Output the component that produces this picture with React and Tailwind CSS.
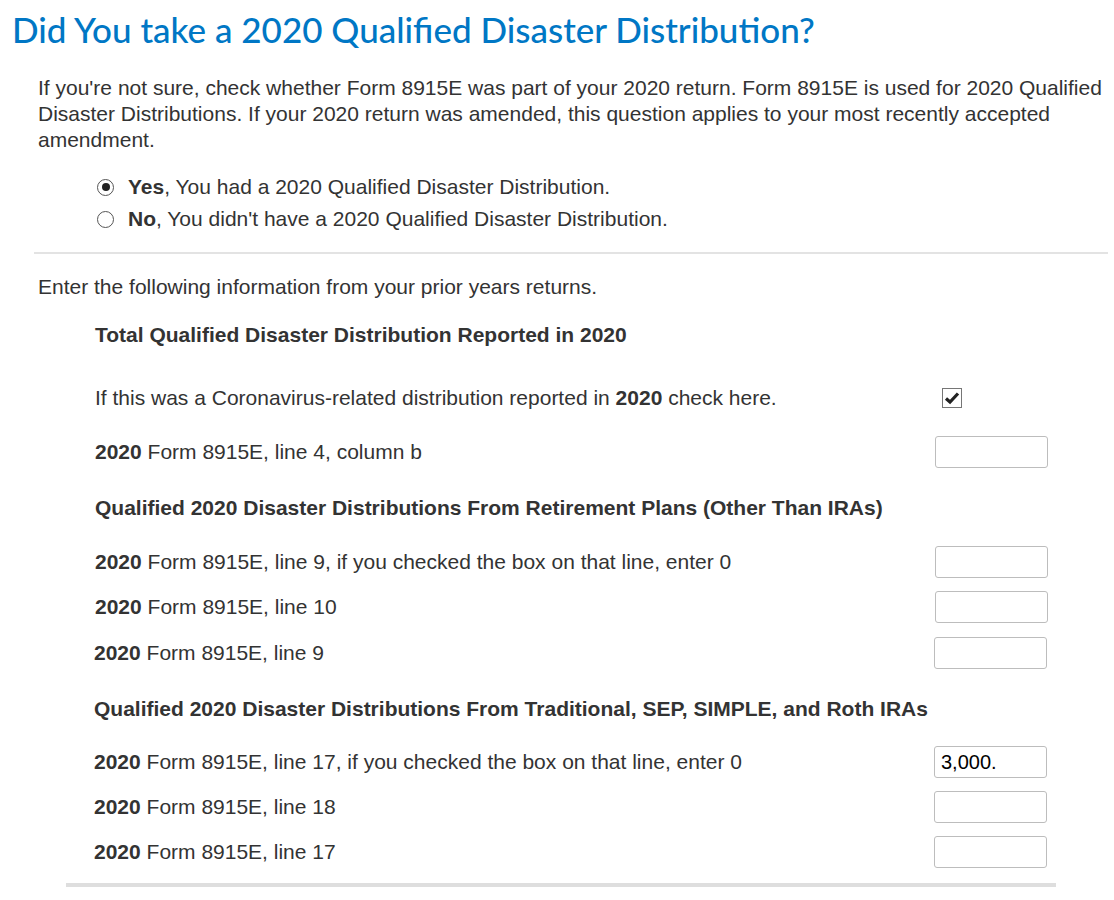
import { useState } from "react";

function Radio({ checked }) {
  return (
    <span className="flex h-[17px] w-[17px] shrink-0 items-center justify-center rounded-full border border-[#555] bg-white">
      {checked && <span className="h-[8px] w-[8px] rounded-full bg-[#222]" />}
    </span>
  );
}

function Box({ value = "" }) {
  return (
    <div className="flex h-[32px] w-[113px] items-center rounded-[3px] border border-[#bdbdbd] bg-white px-[6px] text-[20px] text-black">
      {value}
    </div>
  );
}

function Row({ year, label, value, shift }) {
  return (
    <div className={"flex h-[45px] items-center justify-between " + (shift ? "-ml-[1px] pr-[1px]" : "")}>
      <div>
        <b>{year}</b> {label}
      </div>
      <Box value={value} />
    </div>
  );
}

function Heading({ children, className = "" }) {
  return <div className={"flex h-[45px] items-center font-bold " + className}>{children}</div>;
}

export default function App() {
  const [answer] = useState("yes");

  return (
    <div className="min-h-[900px] bg-white text-[21px] text-[#333]" style={{ fontFamily: '"Liberation Sans", Arial, sans-serif' }}>
      <h1 className="pl-[12px] pt-[10px] text-[35px] leading-[38px] font-medium text-[#0077c5]" style={{ fontFamily: 'Lato, "Open Sans", sans-serif' }}>
        Did You take a 2020 Qualified Disaster Distribution?
      </h1>

      <p className="mt-[27px] pl-[38px] pr-[6px] leading-[26px]">
        If you're not sure, check whether Form 8915E was part of your 2020 return. Form 8915E is used for 2020 Qualified Disaster
        Distributions. If your 2020 return was amended, this question applies to your most recently accepted amendment.
      </p>

      <div className="mt-[18px] pl-[97px]">
        <div className="flex h-[32px] items-center gap-[14px]">
          <Radio checked={answer === "yes"} />
          <span>
            <b>Yes</b>, You had a 2020 Qualified Disaster Distribution.
          </span>
        </div>
        <div className="flex h-[32px] items-center gap-[14px]">
          <Radio checked={answer === "no"} />
          <span>
            <b>No</b>, You didn't have a 2020 Qualified Disaster Distribution.
          </span>
        </div>
      </div>

      <div className="ml-[34px] mr-[6px] mt-[17px] h-[2px] bg-[#e3e3e3]" />

      <p className="mt-[20px] pl-[38px] leading-[26px]">Enter the following information from your prior years returns.</p>

      <div className="ml-[95px] mr-[66px] mt-[12px]">
        <Heading>Total Qualified Disaster Distribution Reported in 2020</Heading>

        <div className="mt-[18px] flex h-[45px] items-center justify-between">
          <div>
            If this was a Coronavirus-related distribution reported in <b>2020</b> check here.
          </div>
          <div className="w-[113px] pl-[7px]">
            <span className="flex h-[20px] w-[20px] items-center justify-center border border-[#767676] bg-white">
              <svg width="16" height="14" viewBox="0 0 16 14">
                <path d="M2 7.5 L6 11 L14 2.5" fill="none" stroke="#222" strokeWidth="3.2" />
              </svg>
            </span>
          </div>
        </div>

        <div className="mt-[9px]">
          <Row year="2020" label="Form 8915E, line 4, column b" />
        </div>

        <Heading className="mt-[11px]">Qualified 2020 Disaster Distributions From Retirement Plans (Other Than IRAs)</Heading>

        <div className="mt-[9px]">
          <Row year="2020" label="Form 8915E, line 9, if you checked the box on that line, enter 0" />
          <Row year="2020" label="Form 8915E, line 10" />
          <div className="mt-[1px]">
            <Row year="2020" label="Form 8915E, line 9" shift />
          </div>
        </div>

        <Heading className="mt-[11px] -ml-[1px]">Qualified 2020 Disaster Distributions From Traditional, SEP, SIMPLE, and Roth IRAs</Heading>

        <div className="mt-[8px]">
          <Row year="2020" label="Form 8915E, line 17, if you checked the box on that line, enter 0" value="3,000." shift />
          <Row year="2020" label="Form 8915E, line 18" shift />
          <Row year="2020" label="Form 8915E, line 17" shift />
        </div>
      </div>

      <div className="ml-[66px] mt-[9px] h-[4px] w-[990px] bg-[#dedede]" />
    </div>
  );
}
